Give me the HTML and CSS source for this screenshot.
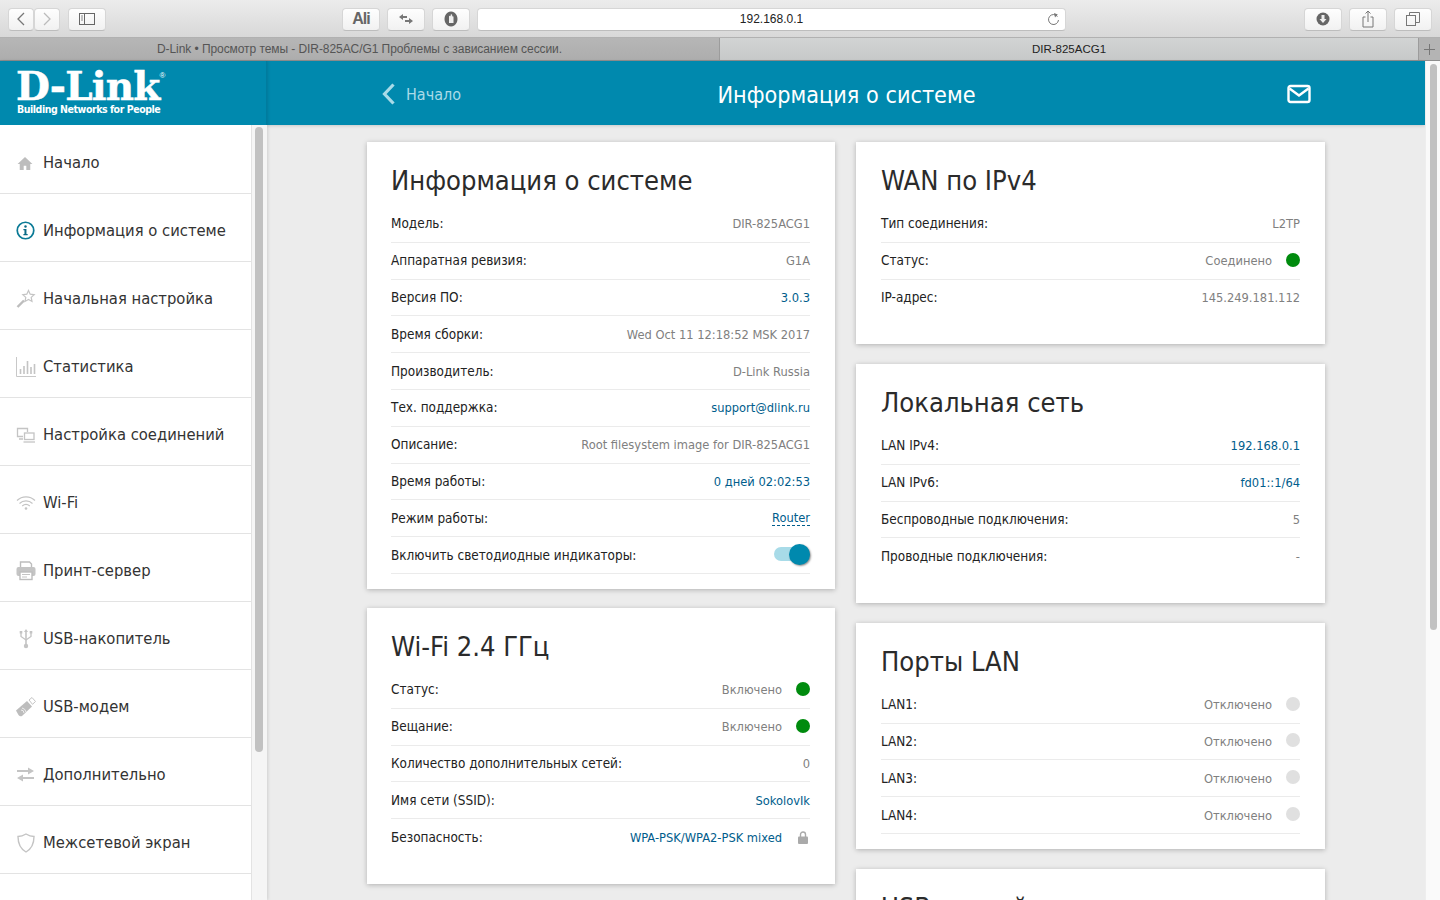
FILE: index.html
```html
<!DOCTYPE html>
<html lang="ru">
<head>
  <meta charset="UTF-8" />
  <title>DIR-825ACG1</title>
  <link rel="stylesheet" href="styles.css">
</head>
<body>
  <div class="toolbar">
    <div class="btn-pair">
      <div class="tool-btn nav-btn"><svg width="10" height="16" viewBox="0 0 10 16"><path d="M8 2L2 8l6 6" fill="none" stroke="#777" stroke-width="1.300"/></svg></div>
      <div class="tool-btn nav-btn"><svg width="10" height="16" viewBox="0 0 10 16"><path d="M2 2l6 6-6 6" fill="none" stroke="#bbb" stroke-width="1.300"/></svg></div>
    </div>
    <div class="tool-btn wide sidebar-btn"><svg width="16" height="12" viewBox="0 0 16 12"><rect x=".5" y=".5" width="15" height="11" fill="none" stroke="#666"/><path d="M5.500 0v12" stroke="#666"/><path d="M2 3h2M2 5h2M2 7h2" stroke="#888"/></svg></div>
    <div class="tool-btn wide ali-btn">Ali</div>
    <div class="tool-btn wide"><svg width="16" height="12" viewBox="0 0 16 12"><path d="M1 4l4-3v2h4v2H5v2z" fill="#777"/><path d="M15 8l-4 3V9H7V7h4V5z" fill="#777"/></svg></div>
    <div class="tool-btn wide"><svg width="14" height="16" viewBox="0 0 14 16"><path d="M7 .5a6.500 7.500 0 1 0 .01 0z" fill="#666"/><path d="M5 12V5.500a.8.8 0 0 1 1.600 0V4a.8.8 0 0 1 1.600 0v1.500a.8.8 0 0 1 1.300.5V12z" fill="#eee"/></svg></div>
    <div class="address">
      <span class="address-text">192.168.0.1</span>
      <svg class="reload" width="13" height="14" viewBox="0 0 13 14"><path d="M10.500 4.500A5 5 0 1 0 11.500 8" fill="none" stroke="#777"/><path d="M7 1l3.800 1.500L8 5.500z" fill="#777"/></svg>
    </div>
    <div class="tool-btn wide"><svg width="14" height="14" viewBox="0 0 14 14"><circle cx="7" cy="7" r="6.500" fill="#666"/><path d="M5.500 3h3v4h2L7 11 3.500 7h2z" fill="#eee"/></svg></div>
    <div class="tool-btn wide"><svg width="12" height="18" viewBox="0 0 12 18"><path d="M3.500 7H1v10h10V7H8.500" fill="none" stroke="#777"/><path d="M6 12V1M3.500 3.500L6 1l2.500 2.500" fill="none" stroke="#777"/></svg></div>
    <div class="tool-btn wide"><svg width="14" height="14" viewBox="0 0 14 14"><rect x=".5" y="3.500" width="9" height="10" fill="none" stroke="#777"/><path d="M3.500 3.500v-3h10v10h-4" fill="none" stroke="#777"/></svg></div>
  </div>

  <div class="tabbar">
    <div class="tab tab-back">D-Link • Просмотр темы - DIR-825AC/G1 Проблемы с зависанием сессии.</div>
    <div class="tab tab-active">DIR-825ACG1</div>
    <div class="tab-add"><svg width="11" height="11" viewBox="0 0 11 11"><path d="M5.500 0v11M0 5.500h11" stroke="#777"/></svg></div>
  </div>

  <div class="page">
    <aside class="side">
      <div class="logo">
        <div class="logo-name">D-Link<sup>®</sup></div>
        <div class="logo-tag">Building Networks for People</div>
      </div>
      <div class="side-body">
        <nav class="menu">
          <a class="menu-item"><span class="menu-icon home-icon"><svg width="16" height="14" viewBox="0 0 18 16"><path d="M9 1L.5 9H3v7h4.500v-5h3v5H15V9h2.500z" fill="#bdbdbd"/></svg></span>Начало</a>
          <a class="menu-item"><span class="menu-icon"><svg width="19" height="19" viewBox="0 0 20 20"><circle cx="10" cy="10" r="8.700" fill="none" stroke="#0a7a96" stroke-width="1.800"/><circle cx="10" cy="5.800" r="1.300" fill="#0a6a85"/><path d="M7.800 8.500h3.200v5.300h1.300v1.300H7.800v-1.300h1.100V9.800H7.800z" fill="#0a6a85"/></svg></span>Информация о системе</a>
          <a class="menu-item"><span class="menu-icon"><svg width="20" height="20" viewBox="0 0 20 20"><path d="M12.500 1.500l1.700 3.700 4 .5-3 2.700.8 4-3.500-2-3.500 2 .8-4-3-2.700 4-.5z" fill="none" stroke="#c4c4c4" stroke-width="1.200"/><path d="M8 11.500L1.500 18" stroke="#bdbdbd" stroke-width="2.400"/></svg></span>Начальная настройка</a>
          <a class="menu-item"><span class="menu-icon"><svg width="20" height="20" viewBox="0 0 20 20"><path d="M.5 0v19.500H20" fill="none" stroke="#c8c8c8"/><path d="M4.500 12v5M8 9v8M11.500 4v13M15 10v7M18.500 7v10" stroke="#c4c4c4" stroke-width="1.600"/></svg></span>Статистика</a>
          <a class="menu-item"><span class="menu-icon"><svg width="20" height="17" viewBox="0 0 20 17"><path d="M7 10.500H1.500v-8h10V6M3 13h4" fill="none" stroke="#c4c4c4" stroke-width="1.300"/><rect x="8.500" y="7" width="9.500" height="6.500" fill="none" stroke="#c4c4c4" stroke-width="1.300"/><path d="M7.500 16h11.500" stroke="#c4c4c4" stroke-width="1.300"/></svg></span>Настройка соединений</a>
          <a class="menu-item"><span class="menu-icon"><svg width="20" height="14" viewBox="0 0 20 14"><path d="M1 4.500a13 13 0 0 1 18 0M3.500 7.500a9.500 9.500 0 0 1 13 0M6.200 10a6 6 0 0 1 7.600 0" fill="none" stroke="#c4c4c4" stroke-width="1.200"/><circle cx="10" cy="12.500" r="1.300" fill="#c4c4c4"/></svg></span>Wi-Fi</a>
          <a class="menu-item"><span class="menu-icon"><svg width="20" height="20" viewBox="0 0 20 20"><path d="M4.500 7V1h9l2 2v4" fill="none" stroke="#bdbdbd" stroke-width="1.400"/><rect x=".5" y="6" width="19" height="9" rx="2" fill="#c4c4c4"/><rect x="4" y="11" width="12" height="7.500" fill="#fff" stroke="#bdbdbd" stroke-width="1.400"/><path d="M6 13.500h8M6 16h5" stroke="#c4c4c4"/></svg></span>Принт-сервер</a>
          <a class="menu-item"><span class="menu-icon usb-icon"><svg width="14" height="20" viewBox="0 0 14 20"><path d="M7 3v13" stroke="#c4c4c4" stroke-width="1.600"/><path d="M2 4v3.500l5 3.500 5-3.500V4" fill="none" stroke="#c4c4c4" stroke-width="1.300"/><circle cx="7" cy="17" r="2.200" fill="#c4c4c4"/><path d="M7 0l2 3H5zM.7 2h2.600v2.500H.7zM10.700 2h2.600v2.500h-2.600z" fill="#c4c4c4"/></svg></span>USB-накопитель</a>
          <a class="menu-item"><span class="menu-icon"><svg width="20" height="20" viewBox="0 0 20 20"><path d="M0 13.500L11 4l5 5.500L6 19q-2 1-3.500-1z" fill="#bdbdbd"/><path d="M13 3l3-2.500 3.500 4-3 2.800z" fill="none" stroke="#c4c4c4"/><path d="M5 13a3 3 0 0 1 3 3M6 11a5 5 0 0 1 4 4" fill="none" stroke="#eee"/></svg></span>USB-модем</a>
          <a class="menu-item"><span class="menu-icon arrows-icon"><svg width="17" height="15" viewBox="0 0 17 15"><path d="M0 3h11V.5L17 4l-6 3.500V5H0z" fill="#c4c4c4"/><path d="M17 10H6V7.500L0 11l6 3.500V12h11z" fill="#c4c4c4"/></svg></span>Дополнительно</a>
          <a class="menu-item"><span class="menu-icon arrows-icon"><svg width="18" height="20" viewBox="0 0 18 20"><path d="M9 1q4 2.500 8 2.500 0 11-8 15.500Q1 14.500 1 3.500 5 3.500 9 1z" fill="none" stroke="#c4c4c4" stroke-width="1.400"/></svg></span>Межсетевой экран</a>
        </nav>
        <div class="side-scroll"><div class="side-thumb"></div></div>
      </div>
    </aside>

    <div class="right">
      <header class="head">
        <a class="head-back"><svg width="14" height="22" viewBox="0 0 14 22"><path d="M11.500 1.500L2.500 11l9 9.500" fill="none" stroke="#a9dbe8" stroke-width="3.200"/></svg>Начало</a>
        <div class="head-title">Информация о системе</div>
        <div class="head-mail"><svg width="24" height="20" viewBox="0 0 24 20"><rect x="1.500" y="2" width="21" height="16" rx="2" fill="none" stroke="#fff" stroke-width="2.400"/><path d="M2.500 4.500L12 11.500l9.500-7" fill="none" stroke="#fff" stroke-width="2.400"/></svg></div>
      </header>

      <main class="content">
        <div class="col col-left">
          <section class="card">
            <h2>Информация о системе</h2>
            <div class="row"><span>Модель:</span><span class="val">DIR-825ACG1</span></div>
            <div class="row"><span>Аппаратная ревизия:</span><span class="val">G1A</span></div>
            <div class="row"><span>Версия ПО:</span><span class="val link">3.0.3</span></div>
            <div class="row"><span>Время сборки:</span><span class="val">Wed Oct 11 12:18:52 MSK 2017</span></div>
            <div class="row"><span>Производитель:</span><span class="val">D-Link Russia</span></div>
            <div class="row"><span>Тех. поддержка:</span><span class="val link">support@dlink.ru</span></div>
            <div class="row"><span>Описание:</span><span class="val">Root filesystem image for DIR-825ACG1</span></div>
            <div class="row"><span>Время работы:</span><span class="val link">0 дней 02:02:53</span></div>
            <div class="row"><span>Режим работы:</span><span class="val link dashed">Router</span></div>
            <div class="row"><span>Включить светодиодные индикаторы:</span><span class="toggle"><span class="toggle-knob"></span></span></div>
          </section>
          <section class="card card-open">
            <h2>Wi-Fi 2.4 ГГц</h2>
            <div class="row"><span>Статус:</span><span class="val">Включено<i class="dot on"></i></span></div>
            <div class="row"><span>Вещание:</span><span class="val">Включено<i class="dot on"></i></span></div>
            <div class="row"><span>Количество дополнительных сетей:</span><span class="val">0</span></div>
            <div class="row"><span>Имя сети (SSID):</span><span class="val link">SokolovIk</span></div>
            <div class="row"><span>Безопасность:</span><span class="val link">WPA-PSK/WPA2-PSK mixed<svg class="lock" width="10" height="13" viewBox="0 0 10 13"><path d="M2.500 6V3.500a2.500 2.500 0 0 1 5 0V6" fill="none" stroke="#aaa" stroke-width="1.400"/><rect y="5.500" width="10" height="7.500" rx="1" fill="#aaa"/></svg></span></div>
          </section>
        </div>
        <div class="col col-right">
          <section class="card card-open">
            <h2>WAN по IPv4</h2>
            <div class="row"><span>Тип соединения:</span><span class="val">L2TP</span></div>
            <div class="row"><span>Статус:</span><span class="val">Соединено<i class="dot on"></i></span></div>
            <div class="row"><span>IP-адрес:</span><span class="val">145.249.181.112</span></div>
          </section>
          <section class="card card-open">
            <h2>Локальная сеть</h2>
            <div class="row"><span>LAN IPv4:</span><span class="val link">192.168.0.1</span></div>
            <div class="row"><span>LAN IPv6:</span><span class="val link">fd01::1/64</span></div>
            <div class="row"><span>Беспроводные подключения:</span><span class="val">5</span></div>
            <div class="row"><span>Проводные подключения:</span><span class="val">-</span></div>
          </section>
          <section class="card">
            <h2>Порты LAN</h2>
            <div class="row"><span>LAN1:</span><span class="val">Отключено<i class="dot"></i></span></div>
            <div class="row"><span>LAN2:</span><span class="val">Отключено<i class="dot"></i></span></div>
            <div class="row"><span>LAN3:</span><span class="val">Отключено<i class="dot"></i></span></div>
            <div class="row"><span>LAN4:</span><span class="val">Отключено<i class="dot"></i></span></div>
          </section>
          <section class="card">
            <h2>USB-устройства</h2>
          </section>
        </div>
      </main>
    </div>

    <div class="page-scroll"><div class="page-thumb"></div></div>
  </div>
</body>
</html>
```

FILE: styles.css
```css
* {
  box-sizing: border-box;
}

body {
  margin: 0;
  height: 900px;
  overflow: hidden;
  display: flex;
  flex-direction: column;
  font-family: "DejaVu Sans Condensed", "DejaVu Sans", sans-serif;
  color: #222;
  background: #ececec;
}

/* browser chrome */
.toolbar {
  height: 38px;
  flex: none;
  display: flex;
  align-items: center;
  padding: 1px 8px 0;
  background: linear-gradient(to bottom, #ececec, #d8d8d8);
  border-bottom: 1px solid #b1b1b1;
}

.tool-btn {
  height: 23px;
  flex: none;
  display: flex;
  align-items: center;
  justify-content: center;
  background: linear-gradient(to bottom, #fefefe, #f1f1f1);
  border: 1px solid #d6d6d6;
  border-bottom-color: #bdbdbd;
  border-radius: 4px;
}

.btn-pair {
  display: flex;
}

.nav-btn {
  width: 26px;
}

.wide {
  width: 38px;
  margin-left: 7px;
}

.sidebar-btn {
  margin-left: 8px;
  margin-right: 229px;
}

.ali-btn {
  font: bold 16px "Liberation Sans", sans-serif;
  letter-spacing: -1px;
  color: #666;
}

.address {
  width: 589px;
  height: 23px;
  margin-left: 7px;
  margin-right: 231px;
  flex: none;
  display: flex;
  align-items: center;
  justify-content: center;
  position: relative;
  background: #fff;
  border: 1px solid #d6d6d6;
  border-bottom-color: #bdbdbd;
  border-radius: 4px;
}

.address-text {
  font: 12px "Liberation Sans", sans-serif;
  color: #222;
}

.reload {
  position: absolute;
  right: 5px;
  top: 3px;
}

.tabbar {
  height: 23px;
  flex: none;
  display: flex;
  font: 11.500px "Liberation Sans", sans-serif;
  border-bottom: 1px solid #8e8e8e;
}

.tab {
  display: flex;
  align-items: center;
  justify-content: center;
}

.tab-back {
  width: 720px;
  font-size: 12px;
  letter-spacing: -0.070px;
  color: #555;
  background: linear-gradient(to bottom, #b6b6b6, #adadad);
  border-right: 1px solid #9c9c9c;
}

.tab-active {
  width: 698px;
  color: #222;
  background: linear-gradient(to bottom, #d2d4d4, #c7c9c9);
}

.tab-add {
  flex: 1;
  display: flex;
  align-items: center;
  justify-content: center;
  background: #b4b4b4;
  border-left: 1px solid #9c9c9c;
}

/* router page */
.page {
  flex: 1;
  display: flex;
  min-height: 0;
}

.side {
  width: 267px;
  flex: none;
  display: flex;
  flex-direction: column;
  background: #f5f5f5;
  box-shadow: 1px 0 3px rgba(0, 0, 0, 0.12);
  z-index: 2;
}

.logo {
  height: 64px;
  flex: none;
  padding: 7px 0 0 16px;
  color: #fff;
  background: #0089ae;
  border-right: 1px solid #007c9e;
}

.logo-name {
  height: 35px;
  font: bold 39px/37px "DejaVu Serif", serif;
  letter-spacing: -0.800px;
  -webkit-text-stroke: 0.500px #fff;
  white-space: nowrap;
}

.logo-name sup {
  font: 8px "Liberation Sans", sans-serif;
  -webkit-text-stroke: 0;
  vertical-align: 22px;
}

.logo-tag {
  padding-left: 1px;
  font: bold 10.500px/13px "DejaVu Sans Condensed", sans-serif;
  letter-spacing: -0.450px;
  white-space: nowrap;
}

.side-body {
  flex: 1;
  display: flex;
  min-height: 0;
}

.menu {
  width: 252px;
  flex: none;
  padding-top: 1px;
  background: #fff;
  border-right: 1px solid #e3e3e3;
}

.menu-item {
  height: 68px;
  padding: 6px 0 0 16px;
  display: flex;
  align-items: center;
  font-size: 16.450px;
  color: #333;
  border-bottom: 1px solid #e3e3e3;
}

.menu-icon {
  width: 27px;
  flex: none;
  display: flex;
}

.home-icon {
  padding-left: 1px;
}

.usb-icon {
  padding-left: 3px;
}

.arrows-icon {
  padding-left: 1px;
}

.side-scroll {
  flex: 1;
  padding: 2px 4px 0 3px;
}

.side-thumb {
  height: 625px;
  background: #c1c1c1;
  border-radius: 4px;
}

.right {
  flex: 1;
  min-width: 0;
  display: flex;
  flex-direction: column;
}

.head {
  height: 64px;
  flex: none;
  display: grid;
  grid-template-columns: 1fr auto 1fr;
  align-items: center;
  padding: 2px 114px 0 115px;
  color: #fff;
  background: #0089ae;
  box-shadow: 0 1px 3px rgba(0, 0, 0, 0.15);
}

.head-back {
  display: flex;
  align-items: center;
  gap: 10px;
  font-size: 16px;
  color: #a9dbe8;
}

.head-title {
  font-size: 23.200px;
}

.head-mail {
  display: flex;
  justify-content: flex-end;
}

.content {
  flex: 1;
  display: flex;
  justify-content: center;
  gap: 21px;
  padding-top: 17px;
}

.col {
  width: 469px;
  display: flex;
  flex-direction: column;
  gap: 20px;
}

.col-left {
  width: 468px;
  gap: 19px;
}

.card {
  flex: none;
  padding: 19px 25px 15px 24px;
  background: #fff;
  box-shadow: 0 1px 5px rgba(0, 0, 0, 0.25);
}

.col-right .card {
  padding-left: 25px;
}

.card h2 {
  margin: 0 0 7px;
  height: 38px;
  font-size: 27.100px;
  line-height: 40px;
  font-weight: normal;
  color: #2b2b2b;
}

.row {
  height: 36.800px;
  display: flex;
  align-items: center;
  justify-content: space-between;
  font-size: 13.450px;
  border-bottom: 1px solid #ebebeb;
}

.card-open .row:last-child {
  border-bottom: none;
}

.card.card-open {
  padding-bottom: 27.600px;
}

.val {
  display: flex;
  align-items: center;
  font-size: 12.780px;
  color: #808080;
}

.link {
  color: #005d8c;
}

.dashed {
  border-bottom: 1px dashed #005d8c;
}

.dot {
  width: 14px;
  height: 14px;
  margin: -2px 0 0 14px;
  border-radius: 50%;
  background: #e0e0e0;
}

.dot.on {
  background: #008b0e;
}

.lock {
  margin: 0 2px 0 16px;
}

.toggle {
  width: 36px;
  height: 14px;
  margin-top: -3px;
  display: block;
  position: relative;
  background: #a8dbe8;
  border-radius: 7px;
}

.toggle-knob {
  width: 21px;
  height: 21px;
  position: absolute;
  right: 0;
  top: -3px;
  background: #0089ae;
  border-radius: 50%;
  box-shadow: 1px 1px 2px rgba(0, 0, 0, 0.45);
}

.page-scroll {
  width: 15px;
  flex: none;
  padding: 3px 3px 0 4px;
  background: #fafafa;
  border-left: 1px solid #eee;
  z-index: 3;
}

.page-thumb {
  height: 566px;
  background: #c1c1c1;
  border-radius: 4px;
}
```
